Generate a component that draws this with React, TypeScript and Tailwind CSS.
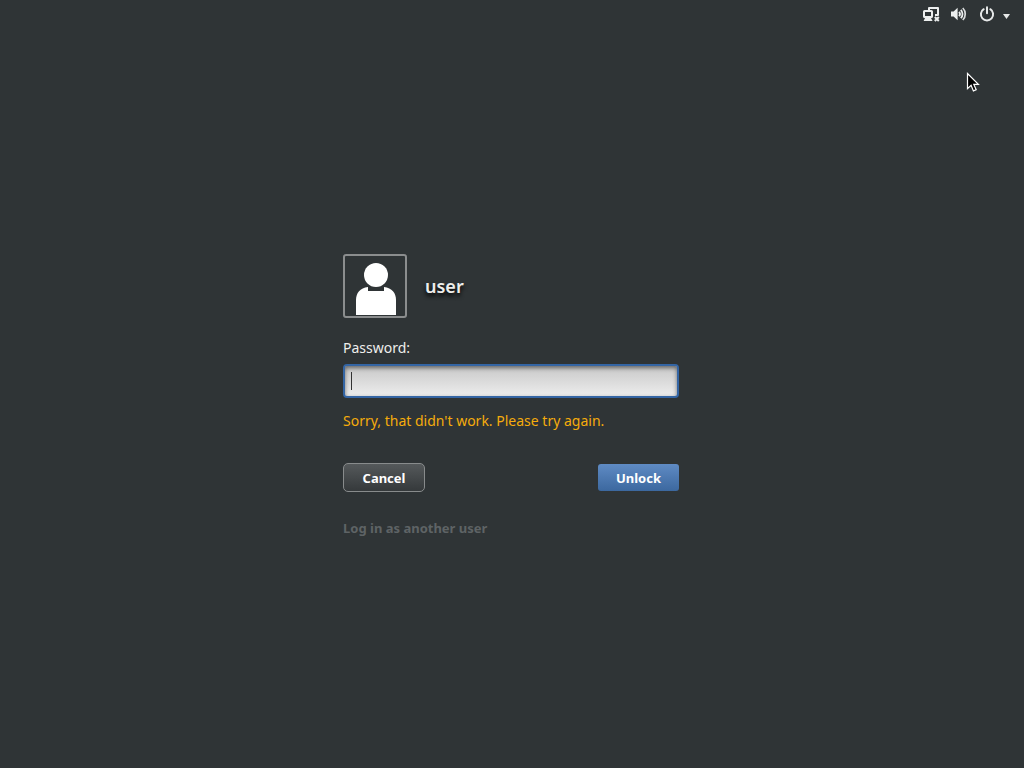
import { useState } from "react";

function NetworkIcon() {
  return (
    <svg width="18" height="16" viewBox="0 0 18 16" fill="none" aria-hidden="true">
      <path d="M6 4V2h9v7h-3" stroke="#eceeee" strokeWidth="2" strokeLinejoin="round" />
      <rect x="1" y="5" width="8" height="6" rx="0.6" stroke="#eceeee" strokeWidth="2" />
      <path d="M2 12h6l1.6 3H0.6z" fill="#eceeee" />
      <path d="M11.8 11l4 4M15.8 11l-4 4" stroke="#eceeee" strokeWidth="2" />
    </svg>
  );
}

function VolumeIcon() {
  return (
    <svg width="16" height="16" viewBox="0 0 16 16" fill="none" aria-hidden="true">
      <path d="M0 5.4h2.6L6.6 1.8v12.4L2.6 10.6H0z" fill="#eceeee" />
      <path d="M8 5.8a3.2 3.2 0 0 1 0 4.4" stroke="#eceeee" strokeWidth="1.8" />
      <path d="M9.8 3.8a6 6 0 0 1 0 8.4" stroke="#eceeee" strokeWidth="1.8" />
      <path d="M11.8 2a8.6 8.6 0 0 1 0 12" stroke="#d8dadb" strokeWidth="1.7" />
    </svg>
  );
}

function PowerIcon() {
  return (
    <svg width="16" height="16" viewBox="0 0 16 16" fill="none" aria-hidden="true">
      <path d="M4.7 3.2a6.1 6.1 0 1 0 6.6 0" stroke="#e6e8e8" strokeWidth="2" strokeLinecap="round" />
      <path d="M8 1.2v6" stroke="#e6e8e8" strokeWidth="2" strokeLinecap="round" />
    </svg>
  );
}

function Avatar() {
  return (
    <div className="size-16 rounded-[3px] border-2 border-[#8b8d8e]">
      <svg width="60" height="60" viewBox="0 0 60 60" fill="#fff" aria-hidden="true">
        <circle cx="31" cy="19" r="12" />
        <path d="M11 59V44c0-7 4-12 12-13v4h16v-4c8 1 12 6 12 13v15z" />
      </svg>
    </div>
  );
}

export default function App() {
  const [password, setPassword] = useState("");

  return (
    <div className="relative flex min-h-screen flex-col bg-[#2f3436] font-['Noto_Sans',sans-serif] text-[13px] leading-5 text-[#eeeeec]">
      <header className="flex h-7 items-center justify-end pr-3">
        <button type="button" aria-label="Network" className="mr-2.5">
          <NetworkIcon />
        </button>
        <button type="button" aria-label="Volume" className="mr-3">
          <VolumeIcon />
        </button>
        <button type="button" aria-label="Power" className="flex items-center gap-2">
          <PowerIcon />
          <svg width="9" height="16" viewBox="0 0 9 16" aria-hidden="true">
            <path d="M0 8h7l-3.5 5z" fill="#e6e8e8" />
          </svg>
        </button>
      </header>

      <main className="flex flex-1 items-center justify-center pb-1">
        <form className="w-[338px] pr-0.5" onSubmit={(e) => e.preventDefault()}>
          <div className="flex items-center gap-[18px]">
            <Avatar />
            <h1 className="text-[18px] leading-6 font-semibold [text-shadow:0_3px_4px_#000]">user</h1>
          </div>

          <label htmlFor="password" className="mt-5 block text-sm">
            Password:
          </label>
          <div className="relative mt-1.5">
            <input
              id="password"
              type="password"
              value={password}
              onChange={(e) => setPassword(e.target.value)}
              className="peer block h-[34px] w-full rounded-[4px] border-2 border-[#3465a4] bg-linear-to-b from-[#c8c8c8] to-[#ededed] px-1.5 text-[#222222] shadow-[inset_0_2px_4px_rgba(0,0,0,0.5)] outline-none"
            />
            {password === "" && <span className="pointer-events-none absolute top-2 left-2 h-[18px] w-px bg-[#333333] peer-focus:hidden" />}
          </div>
          <p role="alert" className="mt-[13px] text-sm text-[#f5ac0c]">
            Sorry, that didn't work. Please try again.
          </p>

          <div className="mt-8 flex items-center justify-between font-bold text-white">
            <button
              type="button"
              className="h-[29px] w-[82px] rounded-[5px] border border-[#888b8c] bg-linear-to-b from-[#55595b] to-[#35393b]"
            >
              Cancel
            </button>
            <button
              type="submit"
              className="h-[27px] w-[81px] rounded-[3px] bg-linear-to-b from-[#5f8bc4] to-[#3c689f]"
            >
              Unlock
            </button>
          </div>

          <a href="#other-user" className="mt-[26px] block w-fit font-bold text-[#5e6365]">
            Log in as another user
          </a>
        </form>
      </main>

      <svg className="pointer-events-none absolute top-[72px] left-[966px]" width="14" height="21" viewBox="0 0 14 21" aria-hidden="true">
        <path d="M1.5 1.5v15.2l3.6-3.4 2.3 5.6 2.8-1.2-2.4-5.3h4.6z" fill="#000" stroke="#fff" strokeWidth="1.2" />
      </svg>
    </div>
  );
}
